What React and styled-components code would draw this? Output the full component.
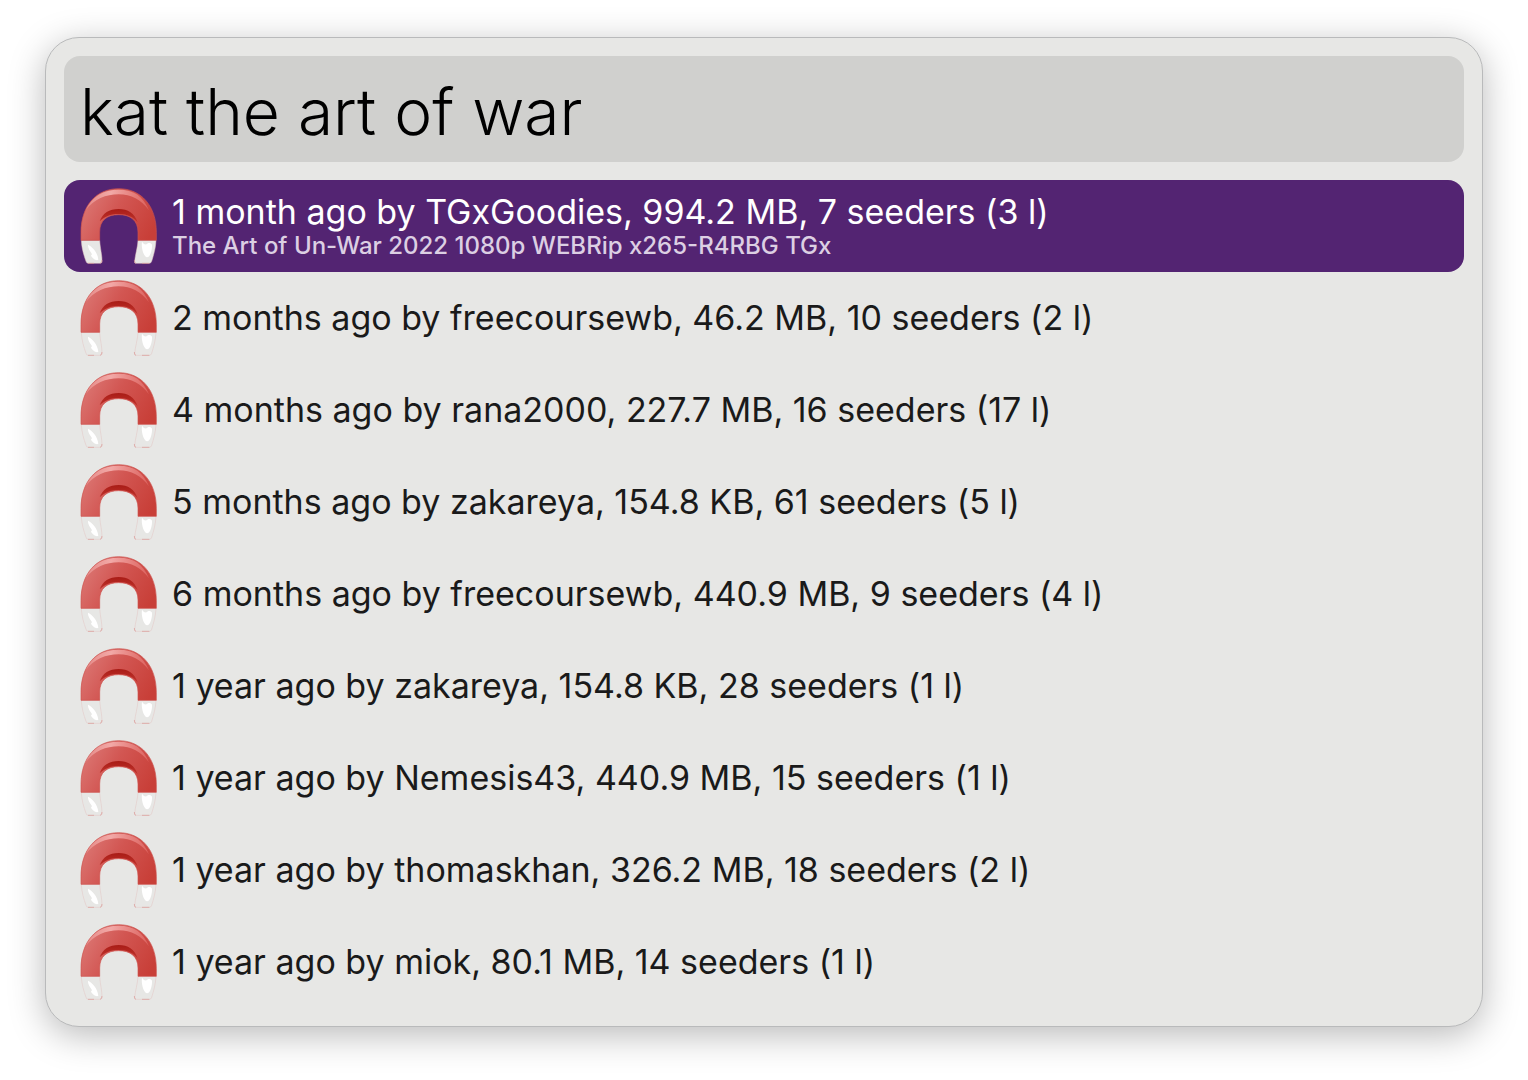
import React, { useState } from "react";
import styled, { createGlobalStyle } from "styled-components";

const GlobalStyle = createGlobalStyle`
  *, *::before, *::after { box-sizing: border-box; }
  body {
    margin: 0;
    background: #ffffff;
    font-family: Inter, "Liberation Sans", sans-serif;
  }
`;

const Stage = styled.main`
  padding: 37px 45px 53px;
`;

const Launcher = styled.form`
  display: flex;
  flex-direction: column;
  gap: 18px;
  padding: 18px;
  border: 1px solid #b9babb;
  border-radius: 34px;
  background: #e7e7e5;
  box-shadow: 0 8px 36px rgba(0, 0, 0, 0.28);
`;

const SearchField = styled.input`
  width: 100%;
  height: 106px;
  padding: 4px 16px 0;
  border: 0;
  border-radius: 16px;
  outline: 0;
  background: #d0d0ce;
  color: #000000;
  font: 300 64px/84px Inter, "Liberation Sans", sans-serif;
`;

const Results = styled.ul`
  margin: 0;
  padding: 0;
  list-style: none;
`;

const ResultRow = styled.button`
  display: flex;
  align-items: center;
  gap: 16px;
  width: 100%;
  height: 92px;
  padding: 0 16px;
  border: 0;
  border-radius: 16px;
  background: ${(p) => (p.$selected ? "#532472" : "transparent")};
  color: ${(p) => (p.$selected ? "#ffffff" : "#1a1a1a")};
  font-family: inherit;
  text-align: left;
`;

const ResultText = styled.span`
  display: flex;
  flex-direction: column;
  min-width: 0;
`;

const Title = styled.span`
  font-size: 34px;
  line-height: 40px;
  white-space: nowrap;
`;

const Subtitle = styled.span`
  color: #dccfe3;
  font-size: 24px;
  font-weight: 500;
  line-height: 28px;
  white-space: nowrap;
`;

const MagnetSvg = styled.svg`
  flex: none;
  width: 76px;
  height: 76px;
`;

function Magnet({ id }) {
  return (
    <MagnetSvg viewBox="30 24 228 228" overflow="visible" aria-hidden="true">
      <defs>
        <linearGradient id={`${id}-body`} x1="0" y1="0.3" x2="1" y2="0.7">
          <stop offset="0" stopColor="#dc7774" />
          <stop offset="0.45" stopColor="#d25652" />
          <stop offset="1" stopColor="#c83f38" />
        </linearGradient>
        <linearGradient id={`${id}-shine`} x1="0" y1="0" x2="1" y2="0">
          <stop offset="0" stopColor="#e58a87" />
          <stop offset="0.4" stopColor="#f2a9a7" />
          <stop offset="1" stopColor="#dc615d" />
        </linearGradient>
        <linearGradient id={`${id}-inner`} x1="0" y1="0" x2="0" y2="1">
          <stop offset="0" stopColor="#a91c16" />
          <stop offset="1" stopColor="#c1342d" />
        </linearGradient>
      </defs>
      <path
        d="M34 181H89C90 204 97 226 96 246Q95 250 90 250H54Q50 250 48 244C41 224 35 205 34 181Z"
        fill="#e7e7e5"
        stroke="#e3c4c2"
        strokeWidth="1.5"
      />
      <path
        d="M204 181H258C257 205 251 224 245 244Q243 250 238 250H197Q193 250 194 245C195 226 203 204 204 181Z"
        fill="#e7e7e5"
        stroke="#e3c4c2"
        strokeWidth="1.5"
      />
      <path d="M54 250H72M90 250Q96 249 96 240M193 240Q193 250 198 250M216 250H238" fill="none" stroke="#d99794" strokeWidth="2" />
      <path
        d="M33 181V157C33 78 78 26 146 26S259 78 259 157V181H204V156C204 121 181 104 146 104S89 121 89 156V181Z"
        fill={`url(#${id}-body)`}
        stroke="#cd524d"
        strokeWidth="2"
      />
      <path
        d="M47 91C66 49 100 29 146 29S218 47 237 91C213 59 184 43 146 43S72 57 47 91Z"
        fill={`url(#${id}-shine)`}
      />
      <path
        d="M89 124C98 99 118 87 146 87S193 99 203 127C190 111 172 102 146 102S104 110 89 124Z"
        fill={`url(#${id}-inner)`}
      />
      <path d="M54 194C65 199 83 216 85 239C80 244 65 235 63 226C66 225 66 222 64 219C59 213 53 202 54 194Z" fill="#ffffff" />
      <path d="M216 185C220 190 223 195 230 193C235 187 243 189 246 194C247 206 242 232 231 232C220 229 213 201 216 185Z" fill="#ffffff" />
    </MagnetSvg>
  );
}

const RESULTS = [
  { title: "1 month ago by TGxGoodies, 994.2 MB, 7 seeders (3 l)", name: "The Art of Un-War 2022 1080p WEBRip x265-R4RBG TGx" },
  { title: "2 months ago by freecoursewb, 46.2 MB, 10 seeders (2 l)" },
  { title: "4 months ago by rana2000, 227.7 MB, 16 seeders (17 l)" },
  { title: "5 months ago by zakareya, 154.8 KB, 61 seeders (5 l)" },
  { title: "6 months ago by freecoursewb, 440.9 MB, 9 seeders (4 l)" },
  { title: "1 year ago by zakareya, 154.8 KB, 28 seeders (1 l)" },
  { title: "1 year ago by Nemesis43, 440.9 MB, 15 seeders (1 l)" },
  { title: "1 year ago by thomaskhan, 326.2 MB, 18 seeders (2 l)" },
  { title: "1 year ago by miok, 80.1 MB, 14 seeders (1 l)" },
];

export default function App() {
  const [query, setQuery] = useState("kat the art of war");
  const [selected, setSelected] = useState(0);

  return (
    <Stage>
      <GlobalStyle />
      <Launcher role="search" onSubmit={(e) => e.preventDefault()}>
        <SearchField
          type="text"
          aria-label="Search"
          spellCheck={false}
          value={query}
          onChange={(e) => setQuery(e.target.value)}
        />
        <Results>
          {RESULTS.map((r, i) => (
            <li key={r.title}>
              <ResultRow type="button" $selected={i === selected} onClick={() => setSelected(i)}>
                <Magnet id={`magnet-${i}`} />
                <ResultText>
                  <Title>{r.title}</Title>
                  {i === selected && r.name && <Subtitle>{r.name}</Subtitle>}
                </ResultText>
              </ResultRow>
            </li>
          ))}
        </Results>
      </Launcher>
    </Stage>
  );
}
